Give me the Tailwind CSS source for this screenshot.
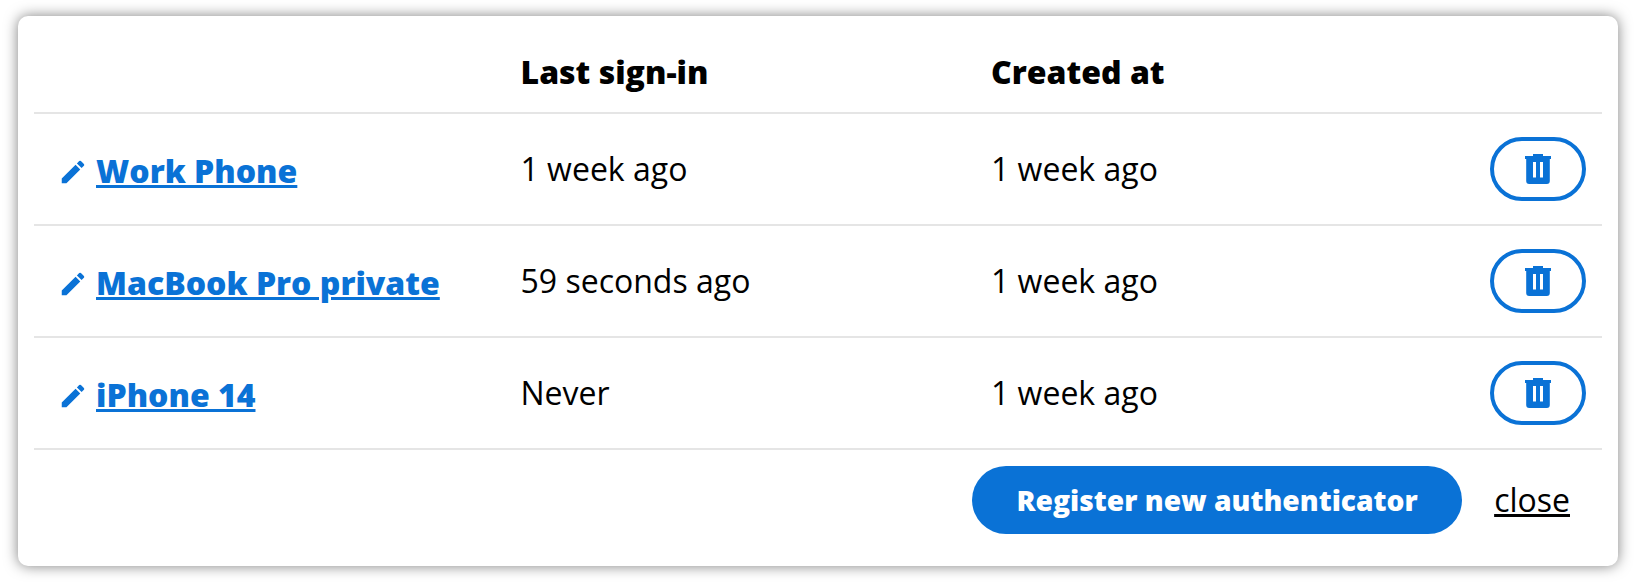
<!DOCTYPE html>
<html lang="en">
<head>
<meta charset="utf-8">
<title>Authenticators</title>
<script src="https://cdn.jsdelivr.net/npm/@tailwindcss/browser@4"></script>
</head>
<body class="bg-white text-black font-['Open_Sans',sans-serif] text-[32px] leading-[48px]">
<svg class="hidden">
  <symbol id="pencil" viewBox="0 0 24 24"><path d="M3 17.25V21h3.75L17.81 9.94l-3.75-3.75L3 17.25zM20.71 7.04a1 1 0 0 0 0-1.41l-2.34-2.34a1 1 0 0 0-1.41 0l-1.83 1.83 3.75 3.75 1.83-1.83z"/></symbol>
  <symbol id="trash" viewBox="0 0 26 30"><path fill-rule="evenodd" d="M8 0h10v2h8v3h-1.2v22a3 3 0 0 1-3 3H4.200a3 3 0 0 1-3-3V5H0V2h8zM8 8v15.500h3V8zM15 8v15.500h3V8z"/></symbol>
</svg>
<main class="h-[584px] px-[18px] pt-4">
<section class="h-[550px] rounded-[10px] bg-white px-4 shadow-[0_0_14px_rgba(0,0,0,0.5)]">
  <div class="grid h-[98px] grid-cols-[486.5px_470.5px_1fr] border-b-2 border-[#e5e5e5] pt-8 font-extrabold">
    <span></span><span>Last sign-in</span><span>Created at</span>
  </div>
  <div class="grid h-28 grid-cols-[486.5px_470.5px_1fr_112px] items-center border-b-2 border-[#e5e5e5]">
    <a class="flex items-center pt-1 pl-6 font-extrabold text-[#0a72d6]"><svg class="mt-0.5 mr-2 size-[30px] fill-current"><use href="#pencil"/></svg><span class="underline decoration-3">Work Phone</span></a>
    <span>1 week ago</span><span>1 week ago</span>
    <button class="flex h-16 w-24 items-center justify-center rounded-full border-4 border-[#0a72d6] text-[#0a72d6]"><svg class="h-[30px] w-[26px] fill-current"><use href="#trash"/></svg></button>
  </div>
  <div class="grid h-28 grid-cols-[486.5px_470.5px_1fr_112px] items-center border-b-2 border-[#e5e5e5]">
    <a class="flex items-center pt-1 pl-6 font-extrabold text-[#0a72d6]"><svg class="mt-0.5 mr-2 size-[30px] fill-current"><use href="#pencil"/></svg><span class="underline decoration-3">MacBook Pro private</span></a>
    <span>59 seconds ago</span><span>1 week ago</span>
    <button class="flex h-16 w-24 items-center justify-center rounded-full border-4 border-[#0a72d6] text-[#0a72d6]"><svg class="h-[30px] w-[26px] fill-current"><use href="#trash"/></svg></button>
  </div>
  <div class="grid h-28 grid-cols-[486.5px_470.5px_1fr_112px] items-center border-b-2 border-[#e5e5e5]">
    <a class="flex items-center pt-1 pl-6 font-extrabold text-[#0a72d6]"><svg class="mt-0.5 mr-2 size-[30px] fill-current"><use href="#pencil"/></svg><span class="underline decoration-3">iPhone 14</span></a>
    <span>Never</span><span>1 week ago</span>
    <button class="flex h-16 w-24 items-center justify-center rounded-full border-4 border-[#0a72d6] text-[#0a72d6]"><svg class="h-[30px] w-[26px] fill-current"><use href="#trash"/></svg></button>
  </div>
  <div class="flex items-center justify-end gap-8 pt-4 pr-8">
    <button class="h-[68px] w-[490px] rounded-full bg-[#0a72d6] text-[28.2px] font-extrabold whitespace-nowrap text-white">Register new authenticator</button>
    <a class="underline decoration-3">close</a>
  </div>
</section>
</main>
</body>
</html>
